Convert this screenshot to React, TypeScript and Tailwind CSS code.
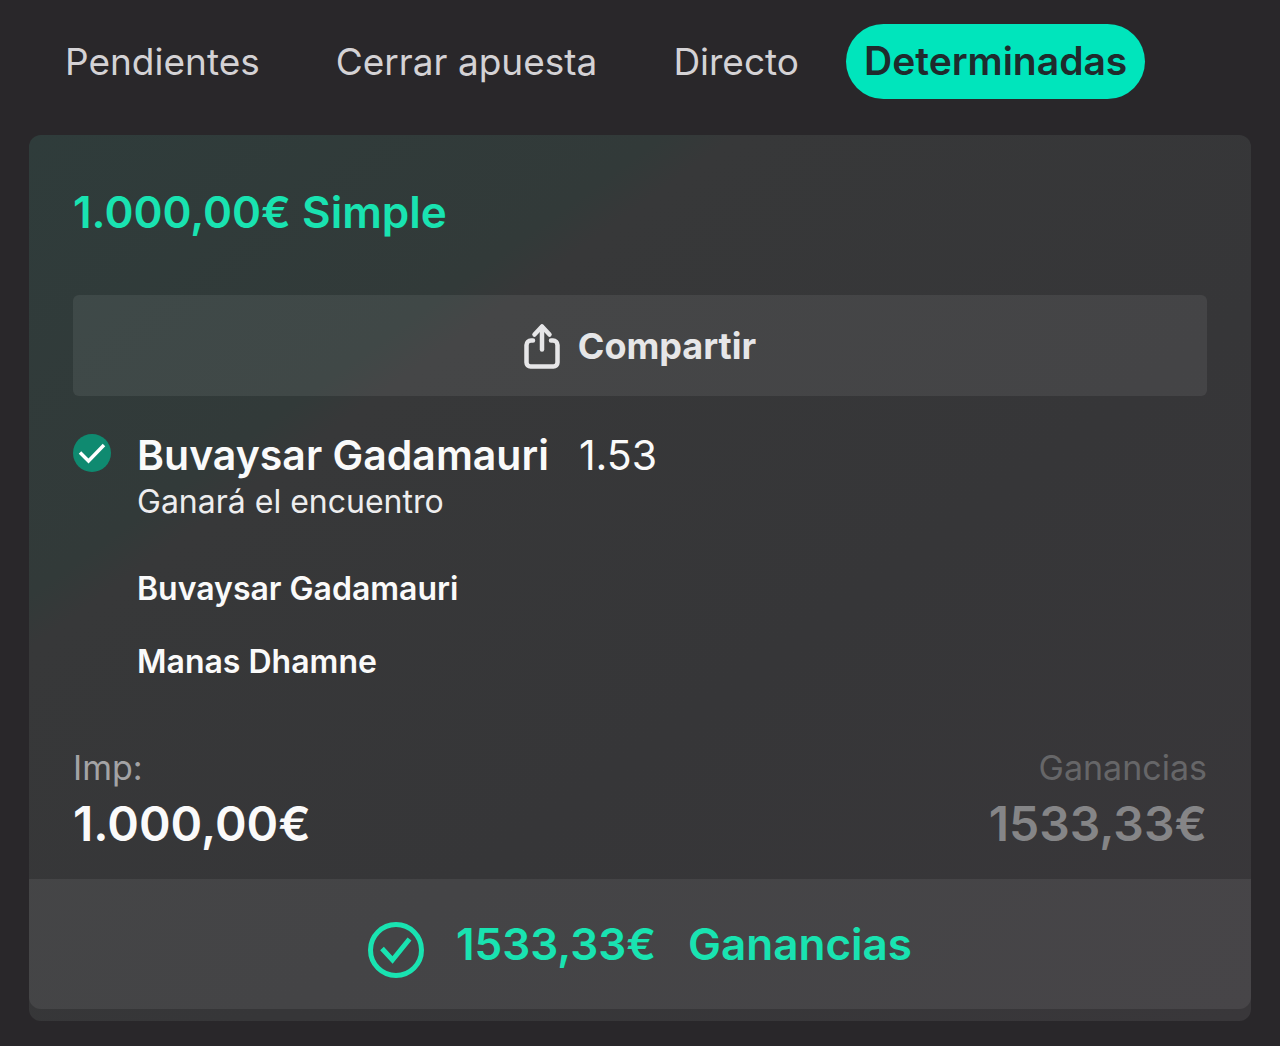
import React, { useState } from 'react';

const tabs = ['Pendientes', 'Cerrar apuesta', 'Directo', 'Determinadas'];

const players = ['Buvaysar Gadamauri', 'Manas Dhamne'];

const ShareIcon = () => (
  <svg width="36" height="46" viewBox="0 0 36 46" fill="none" stroke="currentColor" strokeWidth="4.5" strokeLinecap="round" strokeLinejoin="round" aria-hidden="true">
    <path d="M9 17.500H7A4.500 4.500 0 0 0 2.500 22v17.500a4 4 0 0 0 4 4h23a4 4 0 0 0 4-4V22a4.500 4.500 0 0 0-4.500-4.500h-2" />
    <path d="M18 26.500V4" />
    <path d="M10.500 11.500L18 3.500l7.500 8" />
  </svg>
);

const WonIcon = () => (
  <svg width="38" height="38" viewBox="0 0 38 38" fill="none" aria-hidden="true">
    <circle cx="19" cy="19" r="19" fill="#0f8a70" />
    <path d="M7 18.500l8.500 8.500L31 11" stroke="#fff" strokeWidth="3.5" />
  </svg>
);

const PaidIcon = () => (
  <svg width="56" height="56" viewBox="0 0 56 56" fill="none" stroke="currentColor" aria-hidden="true">
    <circle cx="28" cy="28" r="25.500" strokeWidth="5" />
    <path d="M14 26.500l10.500 11.500L41.500 17" strokeWidth="5" />
  </svg>
);

const BetCard = () => (
  <article className="rounded-xl pb-3 bg-[linear-gradient(to_bottom_right,#2f3c3b_0%,#323a39_26%,#373839_29%,#363638_60%,#39373a_100%)]">
    <div className="px-11 pt-12 pb-[19px]">
      <h2 className="text-[44px] leading-[58px] font-semibold text-[#19e3b1]">1.000,00€ Simple</h2>

      <button type="button" className="mt-[54px] w-full h-[101px] flex items-center justify-center gap-[18px] rounded-md bg-white/7 text-[#e6e6e8] text-[36px] font-bold">
        <ShareIcon />
        Compartir
      </button>

      <div className="mt-8 flex items-start gap-[26px]">
        <div className="pt-[6px]">
          <WonIcon />
        </div>
        <div className="text-[#fafafa]">
          <div className="flex items-baseline gap-[30px] text-[41px] leading-[54px]">
            <h3 className="font-semibold">{players[0]}</h3>
            <span>1.53</span>
          </div>
          <p className="text-[32px] leading-10 text-[#ededee]">Ganará el encuentro</p>
          <ul className="mt-[30px] text-[32px] leading-[73px] font-semibold">
            {players.map((player) => (
              <li key={player}>{player}</li>
            ))}
          </ul>
        </div>
      </div>

      <dl className="mt-[50px] flex justify-between">
        <div>
          <dt className="text-[34px] leading-10 text-[#a3a3a5]">Imp:</dt>
          <dd className="text-[48px] leading-[72px] font-semibold text-[#fafafa]">1.000,00€</dd>
        </div>
        <div className="text-right">
          <dt className="text-[34px] leading-10 text-[#666668]">Ganancias</dt>
          <dd className="text-[48px] leading-[72px] font-semibold text-[#858587]">1533,33€</dd>
        </div>
      </dl>
    </div>

    <footer className="h-[130px] flex items-center justify-center gap-8 rounded-b-xl bg-white/7 text-[44px] font-semibold text-[#19e3b1]">
      <div className="pt-3">
        <PaidIcon />
      </div>
      <span>1533,33€</span>
      <span>Ganancias</span>
    </footer>
  </article>
);

const App = () => {
  const [active, setActive] = useState('Determinadas');

  return (
    <div className="min-h-screen bg-[#29272a] font-['Inter',sans-serif]">
      <nav className="flex items-center gap-[18px] pt-6 px-9 pb-9">
        {tabs.map((tab) => (
          <button
            key={tab}
            type="button"
            onClick={() => setActive(tab)}
            className={
              tab === active
                ? 'h-[75px] px-[18px] rounded-full text-[39px] whitespace-nowrap font-semibold bg-[#00e5bc] text-[#1f2b2d]'
                : 'h-[75px] px-[29px] rounded-full text-[37px] whitespace-nowrap text-[#d4d2d5]'
            }
          >
            {tab}
          </button>
        ))}
      </nav>
      <main className="px-[29px] pb-6">
        <BetCard />
      </main>
    </div>
  );
};

export default App;
